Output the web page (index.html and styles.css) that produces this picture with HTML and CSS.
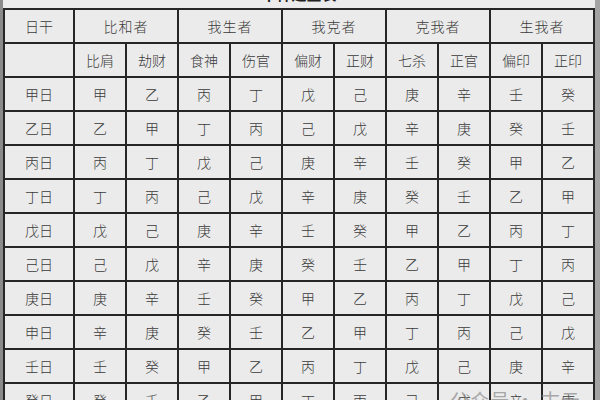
FILE: index.html
```html
<!DOCTYPE html>
<html lang="zh">
<head>
<meta charset="utf-8">
<link rel="stylesheet" href="styles.css">
</head>
<body>
<div class="page">
  <div class="strip"></div>
  <div class="sheet">
    <table class="gods">
      <colgroup>
        <col class="c-first">
        <col><col><col><col><col><col><col><col><col><col>
      </colgroup>
      <tr class="title-row"><td colspan="11" class="title">十神速查表</td></tr>
      <tr class="hrow">
        <td>日干</td>
        <td colspan="2" class="grp">比和者</td>
        <td colspan="2" class="grp">我生者</td>
        <td colspan="2" class="grp">我克者</td>
        <td colspan="2" class="grp">克我者</td>
        <td colspan="2" class="grp">生我者</td>
      </tr>
      <tr class="hrow">
        <td></td>
        <td>比肩</td><td>劫财</td><td>食神</td><td>伤官</td><td>偏财</td><td>正财</td><td>七杀</td><td>正官</td><td>偏印</td><td>正印</td>
      </tr>
      <tr><td>甲日</td><td>甲</td><td>乙</td><td>丙</td><td>丁</td><td>戊</td><td>己</td><td>庚</td><td>辛</td><td>壬</td><td>癸</td></tr>
      <tr><td>乙日</td><td>乙</td><td>甲</td><td>丁</td><td>丙</td><td>己</td><td>戊</td><td>辛</td><td>庚</td><td>癸</td><td>壬</td></tr>
      <tr><td>丙日</td><td>丙</td><td>丁</td><td>戊</td><td>己</td><td>庚</td><td>辛</td><td>壬</td><td>癸</td><td>甲</td><td>乙</td></tr>
      <tr><td>丁日</td><td>丁</td><td>丙</td><td>己</td><td>戊</td><td>辛</td><td>庚</td><td>癸</td><td>壬</td><td>乙</td><td>甲</td></tr>
      <tr><td>戊日</td><td>戊</td><td>己</td><td>庚</td><td>辛</td><td>壬</td><td>癸</td><td>甲</td><td>乙</td><td>丙</td><td>丁</td></tr>
      <tr><td>己日</td><td>己</td><td>戊</td><td>辛</td><td>庚</td><td>癸</td><td>壬</td><td>乙</td><td>甲</td><td>丁</td><td>丙</td></tr>
      <tr><td>庚日</td><td>庚</td><td>辛</td><td>壬</td><td>癸</td><td>甲</td><td>乙</td><td>丙</td><td>丁</td><td>戊</td><td>己</td></tr>
      <tr><td>申日</td><td>辛</td><td>庚</td><td>癸</td><td>壬</td><td>乙</td><td>甲</td><td>丁</td><td>丙</td><td>己</td><td>戊</td></tr>
      <tr><td>壬日</td><td>壬</td><td>癸</td><td>甲</td><td>乙</td><td>丙</td><td>丁</td><td>戊</td><td>己</td><td>庚</td><td>辛</td></tr>
      <tr><td>癸日</td><td>癸</td><td>壬</td><td>乙</td><td>甲</td><td>丁</td><td>丙</td><td>己</td><td>戊</td><td>辛</td><td>庚</td></tr>
    </table>
  </div>
  <div class="watermark">
    <svg class="wm-icon" width="22" height="22" viewBox="0 0 22 22">
      <circle cx="11" cy="11" r="11" fill="#9a9a9a"/>
      <circle cx="8" cy="9" r="1.6" fill="#e6e6e6"/>
      <circle cx="14" cy="9" r="1.6" fill="#e6e6e6"/>
    </svg>
    <span class="wm-text">公众号 · 古云说星</span>
  </div>
</div>
</body>
</html>
```
FILE: styles.css
```css
html, body {
  margin: 0;
  padding: 0;
}
body {
  width: 600px;
  height: 400px;
  overflow: hidden;
  background: #a3a3a3;
  font-family: "Noto Sans CJK SC", "Noto Sans CJK JP", sans-serif;
}
.page {
  position: relative;
  display: flex;
  width: 600px;
  height: 400px;
  overflow: hidden;
}
.strip {
  width: 3px;
  flex: none;
  background: #8a8a8a;
}
.sheet {
  flex: none;
  background: #e9e9e9;
}
.gods {
  border-collapse: collapse;
  table-layout: fixed;
  width: 591px;
  margin-top: -26px;
  background: #ebebeb;
}
.gods col { width: 52px; }
.gods col.c-first { width: 70px; }
.gods td {
  border: 2px solid #262626;
  height: 32px;
  padding: 0;
  text-align: center;
  vertical-align: middle;
  font-size: 14px;
  font-weight: 300;
  color: #3a3a3a;
  line-height: 16px;
}
.gods tr.title-row td {
  border-left: none;
  border-right: none;
  border-top: none;
  height: 28px;
  vertical-align: bottom;
  padding-bottom: 6px;
  font-weight: 700;
  font-size: 15px;
  color: #222;
  background: #ebebeb;
}
.gods td.grp {
  letter-spacing: 1px;
}
.gods tr.hrow td {
  height: 32px;
}
.watermark {
  position: absolute;
  left: 425px;
  top: 386px;
  display: flex;
  align-items: center;
  gap: 6px;
  opacity: 0.75;
}
.wm-text {
  font-size: 19px;
  color: #8f8f8f;
  letter-spacing: 1px;
}
```
